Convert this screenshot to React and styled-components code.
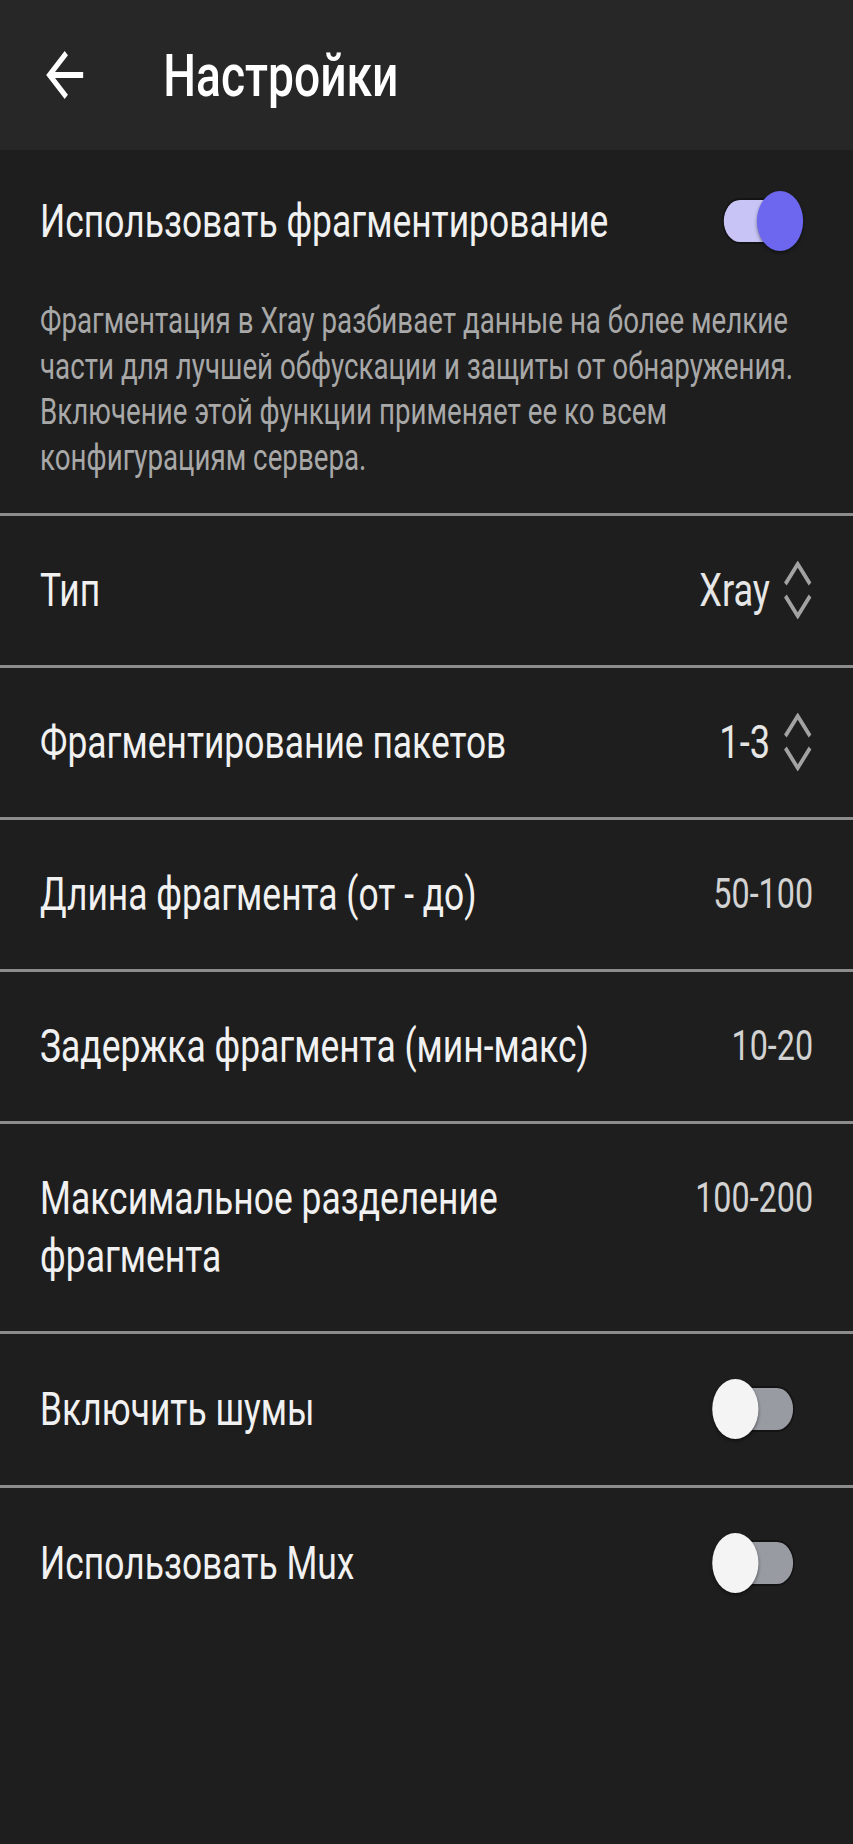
import styled, { createGlobalStyle } from "styled-components";

const GlobalStyle = createGlobalStyle`
  html, body {
    margin: 0;
    padding: 0;
    background: #1e1e1e;
    overflow-x: hidden;
  }

  * {
    box-sizing: border-box;
  }
`;

// the capture is narrower than the phone it was taken on, so the screen is laid
// out at phone width and squeezed horizontally to fit the 853px window
const Screen = styled.div`
  width: 1108px;
  min-height: 1844px;
  transform: scaleX(0.77);
  transform-origin: 0 0;
  background: #1e1e1e;
  color: #f1f1f1;
  font-family: Roboto, "Noto Sans", sans-serif;
`;

const Toolbar = styled.header`
  height: 150px;
  display: flex;
  align-items: center;
  padding-left: 48px;
  background: #272727;
`;

const BackButton = styled.button`
  width: 72px;
  height: 72px;
  padding: 0;
  border: none;
  background: none;
  color: #fff;
  display: flex;
  align-items: center;
  justify-content: center;
  cursor: pointer;
`;

const Title = styled.h1`
  margin: 0 0 0 92px;
  font-size: 60px;
  font-weight: 500;
  color: #fff;
`;

const Intro = styled.section`
  padding: 41px 52px 32px;
`;

const Row = styled.div`
  display: flex;
  justify-content: space-between;
  align-items: ${(p) => (p.$top ? "flex-start" : "center")};
  gap: 48px;
  padding: ${(p) => (p.$intro ? "0" : "45px 52px 46px")};
  border-top: ${(p) => (p.$intro ? "none" : "3px solid #8c8c8c")};
`;

const Label = styled.span`
  flex: 1;
  font-size: 46px;
  line-height: 58px;
  color: #f1f1f1;
`;

const Description = styled.p`
  margin: 48px 0 0;
  font-size: 36px;
  line-height: 45.5px;
  color: #a8a8a8;
`;

const Value = styled.span`
  display: flex;
  align-items: center;
  gap: 16px;
  height: 58px;
  font-size: ${(p) => (p.$select ? "47px" : "42px")};
  line-height: 58px;
  color: ${(p) => (p.$select ? "#e6e6e6" : "#d2d2d2")};
  white-space: nowrap;
`;

const Switch = styled.button`
  position: relative;
  width: 118px;
  height: 60px;
  margin-right: 13px;
  padding: 0;
  border: none;
  background: none;
  flex-shrink: 0;
  cursor: pointer;
`;

const Track = styled.span`
  position: absolute;
  left: 15px;
  right: 13px;
  top: 9px;
  height: 42px;
  border-radius: 21px;
  background: ${(p) => (p.$on ? "#c8c5f6" : "#999ba3")};
  box-shadow: 0 0 0 2px rgba(0, 0, 0, 0.35);
`;

const Thumb = styled.span`
  position: absolute;
  top: 0;
  ${(p) => (p.$on ? "right: 0;" : "left: 0;")}
  width: 60px;
  height: 60px;
  border-radius: 50%;
  background: ${(p) => (p.$on ? "#6c67ee" : "#f4f4f4")};
  box-shadow: 0 2px 4px rgba(0, 0, 0, 0.45);
`;

const ArrowBack = () => (
  <svg width="72" height="72" viewBox="0 0 24 24" fill="currentColor">
    <path d="M20 11H7.83l5.59-5.59L12 4l-8 8 8 8 1.41-1.41L7.83 13H20v-2z" />
  </svg>
);

const Chevrons = () => (
  <svg width="40" height="58" viewBox="0 0 40 58" fill="none" stroke="#a2a2a2" strokeWidth="4.5">
    <path d="M4 23 L20 3 L36 23" />
    <path d="M4 35 L20 55 L36 35" />
  </svg>
);

const Toggle = ({ on }) => (
  <Switch role="switch" aria-checked={on}>
    <Track $on={on} />
    <Thumb $on={on} />
  </Switch>
);

const rows = [
  { label: "Тип", value: "Xray", select: true },
  { label: "Фрагментирование пакетов", value: "1-3", select: true },
  { label: "Длина фрагмента (от - до)", value: "50-100" },
  { label: "Задержка фрагмента (мин-макс)", value: "10-20" },
  { label: "Максимальное разделение фрагмента", value: "100-200", top: true },
  { label: "Включить шумы", toggle: false },
  { label: "Использовать Mux", toggle: false },
];

const App = () => {
  return (
    <>
      <GlobalStyle />
      <Screen>
        <Toolbar>
          <BackButton aria-label="Назад">
            <ArrowBack />
          </BackButton>
          <Title>Настройки</Title>
        </Toolbar>

        <Intro>
          <Row $intro>
            <Label>Использовать фрагментирование</Label>
            <Toggle on />
          </Row>
          <Description>
            Фрагментация в Xray разбивает данные на более мелкие части для
            лучшей обфускации и защиты от обнаружения. Включение этой функции
            применяет ее ко всем конфигурациям сервера.
          </Description>
        </Intro>

        {rows.map((row) => (
          <Row key={row.label} $top={row.top}>
            <Label>{row.label}</Label>
            {row.toggle !== undefined ? (
              <Toggle on={row.toggle} />
            ) : (
              <Value $select={row.select}>
                {row.value}
                {row.select && <Chevrons />}
              </Value>
            )}
          </Row>
        ))}
      </Screen>
    </>
  );
};

export default App;
